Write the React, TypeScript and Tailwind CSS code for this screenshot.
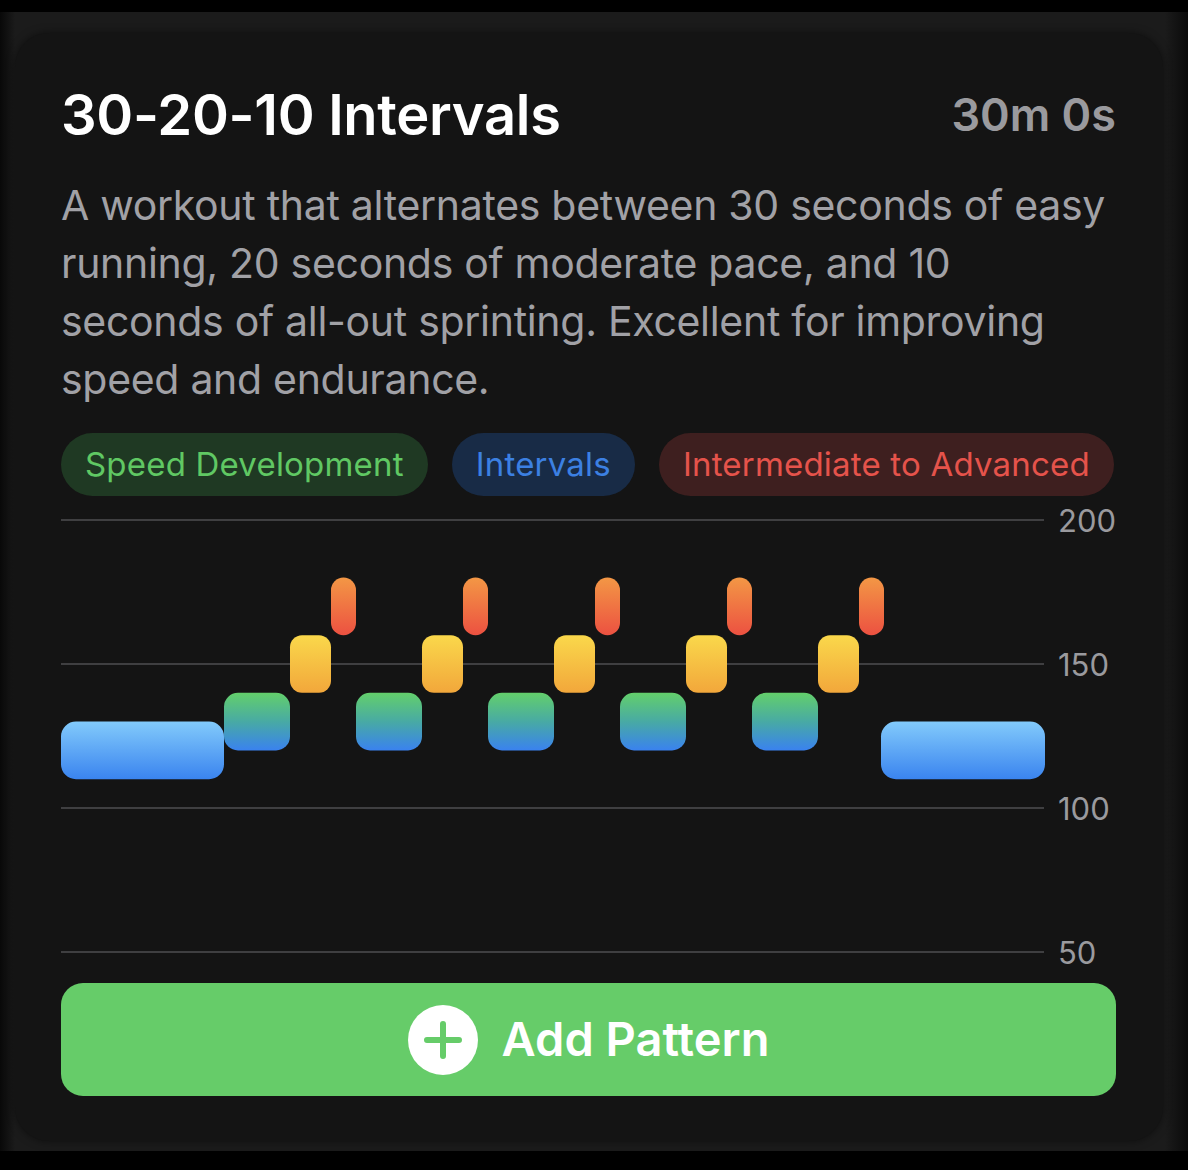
import React from 'react';

type Seg = { x: number; w: number; lo: number; hi: number; kind: 'easy' | 'mod' | 'hard' | 'max' };

const PX_PER_UNIT = 2.88;
const TOP = 24;
const y = (v: number) => TOP + (200 - v) * PX_PER_UNIT;

function buildSegments(): Seg[] {
  const segs: Seg[] = [{ x: 0, w: 163, lo: 110, hi: 130, kind: 'easy' }];
  for (let i = 0; i < 5; i++) {
    const s = 163 + i * 132;
    segs.push({ x: s, w: 66, lo: 120, hi: 140, kind: 'mod' });
    segs.push({ x: s + 66, w: 41, lo: 140, hi: 160, kind: 'hard' });
    segs.push({ x: s + 107, w: 25, lo: 160, hi: 180, kind: 'max' });
  }
  segs.push({ x: 820, w: 164, lo: 110, hi: 130, kind: 'easy' });
  return segs;
}

const radius: Record<Seg['kind'], number> = { easy: 15, mod: 14, hard: 12, max: 12.5 };

function PatternChart() {
  const segs = buildSegments();
  const lines = [200, 150, 100, 50];
  return (
    <svg width={1055} height={478} viewBox="0 0 1055 478" className="block shrink-0">
      <defs>
        <linearGradient id="g-easy" x1="0" y1="0" x2="0" y2="1">
          <stop offset="0" stopColor="#82cafb" />
          <stop offset="1" stopColor="#3a84ef" />
        </linearGradient>
        <linearGradient id="g-mod" x1="0" y1="0" x2="0" y2="1">
          <stop offset="0" stopColor="#63cf6b" />
          <stop offset="0.5" stopColor="#48aaa4" />
          <stop offset="1" stopColor="#3a82ef" />
        </linearGradient>
        <linearGradient id="g-hard" x1="0" y1="0" x2="0" y2="1">
          <stop offset="0" stopColor="#fad84b" />
          <stop offset="1" stopColor="#f2a73b" />
        </linearGradient>
        <linearGradient id="g-max" x1="0" y1="0" x2="0" y2="1">
          <stop offset="0" stopColor="#f39745" />
          <stop offset="1" stopColor="#ec5141" />
        </linearGradient>
      </defs>
      {lines.map(v => (
        <g key={v}>
          <line x1={0} x2={983} y1={y(v)} y2={y(v)} stroke="#3f3f41" strokeWidth={2} />
          <text
            x={997}
            y={y(v)}
            dominantBaseline="central"
            fill="#9a9a9e"
            fontSize={31}
            fontFamily="Inter, 'Noto Sans', sans-serif"
          >
            {v}
          </text>
        </g>
      ))}
      {segs.map((s, i) => (
        <rect
          key={i}
          x={s.x}
          y={y(s.hi)}
          width={s.w}
          height={(s.hi - s.lo) * PX_PER_UNIT}
          rx={radius[s.kind]}
          fill={`url(#g-${s.kind})`}
        />
      ))}
    </svg>
  );
}

function Tag({ label, tone }: { label: string; tone: 'green' | 'blue' | 'red' }) {
  const tones = {
    green: 'bg-[#1f3923] text-[#60c863]',
    blue: 'bg-[#182b46] text-[#3c80e2]',
    red: 'bg-[#3e1f1f] text-[#e5534b]',
  };
  return (
    <span
      className={`inline-flex h-[63px] shrink-0 items-center whitespace-nowrap rounded-full px-[24px] text-[33px] tracking-[0.2px] ${tones[tone]}`}
    >
      {label}
    </span>
  );
}

export default function App() {
  return (
    <div className="min-h-[1170px] bg-black pt-3 font-['Inter','Noto_Sans',sans-serif]">
      <div className="h-[1139px] bg-[linear-gradient(90deg,#080808_0px,#1b1b1b_15px,#1b1b1b_1165px,#0a0a0a_1188px)] pb-[10px] pl-[15px] pr-[25px] pt-[21px]">
        <div className="flex h-full flex-col rounded-[34px] bg-[#141414] pl-[46px] pr-[47px] pt-[52px] shadow-[0_0_8px_rgba(0,0,0,0.5)]">
          <div className="flex shrink-0 items-center justify-between">
            <h1 className="text-[56px] font-semibold leading-[60px] tracking-[-0.3px] text-white">30-20-10 Intervals</h1>
            <span className="text-[45px] font-semibold leading-[60px] text-[#9a9a9e]">30m 0s</span>
          </div>
          <p className="mt-[31px] shrink-0 whitespace-nowrap text-[41px] leading-[58px] tracking-[-0.3px] text-[#a1a1a6]">
            A workout that alternates between 30 seconds of easy
            <br />
            running, 20 seconds of moderate pace, and 10
            <br />
            seconds of all-out sprinting. Excellent for improving
            <br />
            speed and endurance.
          </p>
          <div className="mt-[25px] flex shrink-0 gap-[24px]">
            <Tag label="Speed Development" tone="green" />
            <Tag label="Intervals" tone="blue" />
            <Tag label="Intermediate to Advanced" tone="red" />
          </div>
          <PatternChart />
          <button className="mt-[9px] flex h-[113px] w-full shrink-0 items-center justify-center gap-[24px] rounded-[22px] bg-[#66cc69]">
            <svg width={70} height={70} viewBox="0 0 70 70">
              <circle cx={35} cy={35} r={35} fill="#ffffff" />
              <path d="M35 19v32M19 35h32" stroke="#66cc69" strokeWidth={6} strokeLinecap="round" />
            </svg>
            <span className="text-[47px] font-semibold text-white">Add Pattern</span>
          </button>
        </div>
      </div>
    </div>
  );
}
